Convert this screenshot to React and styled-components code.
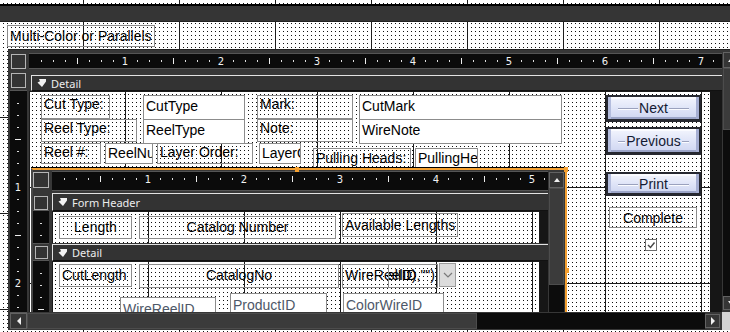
import React from "react"
import styled, { createGlobalStyle, css } from "styled-components"

const FRAME = "#373737"
const INK = "#0b0b0b"
const ORANGE = "#f5a02f"

const GlobalStyle = createGlobalStyle`
  html, body {
    margin: 0;
    padding: 0;
    background: #fff;
    overflow: hidden;
  }
  body {
    font-family: "Liberation Sans", Arial, sans-serif;
  }
`

// design-surface grid: 4px dots, a line every inch (96px)
const dotGrid = (ox = 0, oy = 0) => css`
  background-color: #111;
  background-image: linear-gradient(90deg, #1b1b1b 1px, transparent 1px),
    linear-gradient(180deg, #1b1b1b 1px, transparent 1px),
    linear-gradient(90deg, #fff 3px, transparent 3px),
    linear-gradient(180deg, #fff 3px, transparent 3px);
  background-size: 96px 96px, 96px 96px, 4px 4px, 4px 4px;
  background-position: ${ox}px 0, 0 ${oy}px, 0 0, 0 0;
`

const placed = css`
  position: absolute;
  left: ${p => p.$x}px;
  top: ${p => p.$y}px;
  width: ${p => p.$w}px;
  height: ${p => p.$h}px;
`

const boxText = css`
  box-sizing: border-box;
  border: 1px solid #8c8c8c;
  font: 14px/16px "Liberation Sans", Arial, sans-serif;
  color: #000;
  white-space: nowrap;
  overflow: hidden;
  padding: 0 2px;
`

const Canvas = styled.div`
  width: 730px;
  height: 332px;
  overflow: hidden;
  ${dotGrid(83, 21)}
`

const ParentBar = styled.div`
  margin-top: 4px;
  height: 15px;
  background: #353535;
  border-top: 2px solid #000;
  border-bottom: 1px solid #222;
`

const TitleRow = styled.div`
  box-sizing: border-box;
  height: 28px;
  padding: 3px 0 0 7px;
`

const TitleLabel = styled.div`
  ${boxText}
  width: 148px;
  height: 22px;
  padding-top: 2px;
`

const FormWindow = styled.div`
  margin-left: 8px;
  width: 740px;
  height: 280px;
  display: grid;
  grid-template-columns: 21px 693px 17px;
  grid-template-rows: 21px 20px 221px 18px;
  background: ${FRAME};
  box-shadow: 0 -1px 0 #222;
`

const Cell = styled.div`
  grid-column: ${p => p.$col};
  grid-row: ${p => p.$row};
  display: flex;
  flex-direction: ${p => (p.$column ? "column" : "row")};
  min-width: 0;
  min-height: 0;
  padding: ${p => p.$pad || "0"};
  box-sizing: border-box;
`

const SelectBox = styled.div`
  box-sizing: border-box;
  width: ${p => p.$size || 15}px;
  height: ${p => p.$size || 15}px;
  border: 1px solid #b5b5b5;
  background: #333;
`

const RulerStrip = styled.div`
  background: ${INK};
  box-shadow: 0 -1px 0 #555, 0 1px 0 #555;
  flex: ${p => (p.$fill ? 1 : "none")};
  svg {
    display: block;
  }
`

const SectionBar = styled.div`
  box-sizing: border-box;
  flex: 1;
  height: ${p => p.$h || 16}px;
  margin-top: ${p => p.$top || 0}px;
  background: #333;
  border-top: 1px solid #e2e2e2;
  border-left: 1px solid #e2e2e2;
  border-bottom: 1px solid #111;
  display: flex;
  align-items: center;
  gap: 4px;
  padding-left: 5px;
  color: #ededed;
  font: 11px "Noto Sans", "DejaVu Sans", sans-serif;
`

const Surface = styled.div`
  position: relative;
  overflow: hidden;
  width: ${p => p.$w}px;
  height: 100%;
  flex: none;
  ${dotGrid(0, 0)}
`

const DarkFill = styled.div`
  flex: 1;
  background: #161616;
`

const Label = styled.div`
  ${placed}
  ${boxText}
  text-align: ${p => (p.$center ? "center" : "left")};
  padding-top: ${p => p.$pt || 0}px;
`

const TextBox = styled.div`
  ${placed}
  ${boxText}
  background: ${p => (p.$clear ? "transparent" : "#fff")};
  color: ${p => (p.$muted ? "#4e5868" : "#000")};
  padding-top: ${p => p.$pt ?? 2}px;
  display: flex;
  justify-content: ${p => (p.$end ? "flex-end" : "flex-start")};
`

const DropButton = styled.div`
  ${placed}
  box-sizing: border-box;
  background: #dcdcdc;
  border: 1px solid #9c9c9c;
  display: flex;
  align-items: center;
  justify-content: center;
`

const CmdButton = styled.div`
  ${placed}
  box-sizing: border-box;
  border: 2px solid #262830;
  border-bottom-width: 3px;
  background: linear-gradient(180deg, #f3f5fd 0%, #e0e5f8 50%, #cfd6f1 100%);
  box-shadow: inset 3px 0 0 #b3bcdd, inset -3px 0 0 #a6afd3,
    inset 0 2px 0 #fafbff, inset 0 -2px 0 #9ca5c8;
  display: flex;
  align-items: center;
  justify-content: center;
  font: 14px "Liberation Sans", Arial, sans-serif;
  color: #141a33;

  &::before {
    content: "";
    position: absolute;
    left: 10px;
    right: 10px;
    top: 50%;
    height: 1px;
    background: #9aa1bd;
    box-shadow: 0 1px 0 #fafbff;
  }

  span {
    position: relative;
    padding: 0 1px;
    background: linear-gradient(180deg, transparent 0 35%, #e0e5f8 35% 65%, transparent 65%);
  }
`

const CheckBox = styled.div`
  ${placed}
  box-sizing: border-box;
  border: 1px solid #6e6e6e;
  background: #fff;
  svg {
    display: block;
  }
`

const Subform = styled.div`
  ${placed}
  box-sizing: border-box;
  border-top: 2px solid ${ORANGE};
  border-right: 2px solid ${ORANGE};
  border-left: 2px solid #474747;
  box-shadow: 0 -1px 0 #000;
  background: ${FRAME};
  display: grid;
  grid-template-columns: 19px 496px 17px;
  grid-template-rows: 20px 21px 32px 18px 1fr;
`

const Handle = styled.div`
  position: absolute;
  left: ${p => p.$x}px;
  top: ${p => p.$y}px;
  width: 4px;
  height: 5px;
  background: ${ORANGE};
`

const ScrollArrow = styled.div`
  box-sizing: border-box;
  flex: none;
  width: ${p => p.$w}px;
  height: ${p => p.$h}px;
  margin: ${p => p.$m || "0"};
  background: #353535;
  border: 1px solid #626262;
  display: flex;
  align-items: center;
  justify-content: center;
  svg {
    display: block;
  }
`

const ScrollThumb = styled.div`
  box-sizing: border-box;
  flex: none;
  width: ${p => (p.$w ? `${p.$w}px` : "auto")};
  height: ${p => (p.$h ? `${p.$h}px` : "auto")};
  background: #3b3b3b;
  border: 1px solid #4c4c4c;
`

const ScrollTrack = styled.div`
  flex: 1;
  background: #0c0c0c;
`

const Corner = styled.div`
  grid-column: 3;
  grid-row: 4;
  background: #d4d4d4;
`

const SectionGlyph = () => (
  <svg width="10" height="10" viewBox="0 0 10 10">
    <path d="M2 1 L9 1 L9 3.5 L5 9 L0.5 4.5 L3 3.2 Z" fill="#f2f2f2" />
  </svg>
)

const Arrow = ({ dir }) => {
  const pts = {
    up: "1,5 4,1 7,5",
    down: "1,1 4,5 7,1",
    left: "5,0 5,8 1,4",
    right: "1,0 1,8 5,4",
  }[dir]
  const vertical = dir === "up" || dir === "down"
  return (
    <svg width={vertical ? 8 : 6} height={vertical ? 6 : 8}>
      <polygon points={pts} fill="#f0f0f0" />
    </svg>
  )
}

const HRuler = ({ length }) => {
  const marks = []
  for (let i = 1; i * 12 < length; i++) {
    const x = i * 12
    if (i % 8 === 0) {
      marks.push(
        <text key={i} x={x} y={11} textAnchor="middle" fontSize="10" fill="#f2f2f2" fontFamily="DejaVu Sans, sans-serif">
          {i / 8}
        </text>
      )
    } else if (i % 4 === 0) {
      marks.push(<rect key={i} x={x} y={4} width={1} height={6} fill="#eee" />)
    } else {
      marks.push(<rect key={i} x={x} y={6} width={1} height={2} fill="#ddd" />)
    }
  }
  return (
    <svg width={length} height={14} shapeRendering="crispEdges">
      {marks}
    </svg>
  )
}

const VRuler = ({ length, width = 17 }) => {
  const marks = []
  const c = Math.floor(width / 2)
  for (let i = 1; i * 12 < length; i++) {
    const y = i * 12
    if (i % 8 === 0) {
      marks.push(
        <text key={i} x={c} y={y + 4} textAnchor="middle" fontSize="10" fill="#f2f2f2" fontFamily="DejaVu Sans, sans-serif">
          {i / 8}
        </text>
      )
    } else if (i % 4 === 0) {
      marks.push(<rect key={i} x={c - 3} y={y} width={6} height={1} fill="#eee" />)
    } else {
      marks.push(<rect key={i} x={c - 1} y={y} width={2} height={1} fill="#ddd" />)
    }
  }
  return (
    <svg width={width} height={length} shapeRendering="crispEdges">
      {marks}
    </svg>
  )
}

const SubformControl = () => (
  <Subform $x={2} $y={77} $w={536} $h={170}>
    <Cell $col={1} $row={1} $pad="2px 0 0 0">
      <SelectBox $size={16} />
    </Cell>
    <Cell $col={2} $row={1} $pad="2px 0 0 0">
      <RulerStrip $fill>
        <HRuler length={496} />
      </RulerStrip>
    </Cell>
    <Cell $col={3} $row="1 / 6" $column $pad="2px 1px 0 1px">
      <ScrollArrow $w={15} $h={16}>
        <Arrow dir="up" />
      </ScrollArrow>
      <ScrollThumb $h={97} />
      <ScrollTrack />
    </Cell>

    <Cell $col={1} $row={2} $pad="6px 0 0 1px">
      <SelectBox $size={14} />
    </Cell>
    <Cell $col={2} $row={2}>
      <SectionBar $top={3} $h={18}>
        <SectionGlyph />
        Form Header
      </SectionBar>
    </Cell>

    <Cell $col={1} $row={3}>
      <RulerStrip>
        <VRuler length={32} width={16} />
      </RulerStrip>
    </Cell>
    <Cell $col={2} $row={3}>
      <Surface $w={487}>
        <Label $x={7} $y={5} $w={73} $h={23} $center $pt={2}>Length</Label>
        <Label $x={87} $y={5} $w={197} $h={23} $center $pt={2}>Catalog Number</Label>
        <Label $x={290} $y={2} $w={116} $h={24} $center $pt={3}>Available Lengths</Label>
      </Surface>
      <DarkFill />
    </Cell>

    <Cell $col={1} $row={4} $pad="3px 0 0 2px">
      <SelectBox $size={13} />
    </Cell>
    <Cell $col={2} $row={4}>
      <SectionBar $top={1} $h={17}>
        <SectionGlyph />
        Detail
      </SectionBar>
    </Cell>

    <Cell $col={1} $row={5}>
      <RulerStrip>
        <VRuler length={67} width={16} />
      </RulerStrip>
    </Cell>
    <Cell $col={2} $row={5}>
      <Surface $w={487}>
        <Label $x={7} $y={3} $w={73} $h={23} $pt={2}>CutLength</Label>
        <Label $x={87} $y={3} $w={200} $h={24} $center $pt={2}>CatalogNo</Label>
        <TextBox $x={290} $y={3} $w={96} $h={24} $clear>WireReelID</TextBox>
        <TextBox $x={336} $y={3} $w={50} $h={24} $clear $end>ReelID),"")</TextBox>
        <DropButton $x={387} $y={2} $w={17} $h={24}>
          <svg width="10" height="6">
            <polyline points="1,1 5,5 9,1" fill="none" stroke="#7a7a7a" strokeWidth="1.2" />
          </svg>
        </DropButton>
        <TextBox $x={68} $y={36} $w={96} $h={24} $muted $pt={3}>WireReelID</TextBox>
        <TextBox $x={178} $y={32} $w={97} $h={24} $muted $pt={3}>ProductID</TextBox>
        <TextBox $x={291} $y={32} $w={101} $h={24} $muted $pt={3}>ColorWireID</TextBox>
      </Surface>
      <DarkFill />
    </Cell>
  </Subform>
)

export default function App() {
  return (
    <>
      <GlobalStyle />
      <Canvas>
        <ParentBar />
        <TitleRow>
          <TitleLabel>Multi-Color or Parallels</TitleLabel>
        </TitleRow>

        <FormWindow>
          <Cell $col={1} $row={1} $pad="4px 0 0 3px">
            <SelectBox />
          </Cell>
          <Cell $col={2} $row={1} $pad="4px 0 3px 0">
            <RulerStrip $fill>
              <HRuler length={693} />
            </RulerStrip>
          </Cell>
          <Cell $col={3} $row="1 / 4" $column $pad="2px 0 2px 1px">
            <ScrollArrow $w={16} $h={16}>
              <Arrow dir="up" />
            </ScrollArrow>
            <ScrollThumb $h={62} />
            <ScrollTrack />
            <ScrollArrow $w={16} $h={14}>
              <Arrow dir="down" />
            </ScrollArrow>
          </Cell>

          <Cell $col={1} $row={2} $pad="2px 0 0 3px">
            <SelectBox />
          </Cell>
          <Cell $col={2} $row={2} $pad="4px 0 0 2px">
            <SectionBar>
              <SectionGlyph />
              Detail
            </SectionBar>
          </Cell>

          <Cell $col={1} $row={3} $pad="0 0 0 2px">
            <RulerStrip>
              <VRuler length={221} />
            </RulerStrip>
          </Cell>
          <Cell $col={2} $row={3}>
            <Surface $w={681}>
              <Label $x={12} $y={4} $w={69} $h={24}>Cut Type:</Label>
              <Label $x={12} $y={28} $w={96} $h={23}>Reel Type:</Label>
              <Label $x={12} $y={52} $w={60} $h={21}>Reel #:</Label>
              <TextBox $x={76} $y={52} $w={48} $h={21} $pt={1}>ReelNumber</TextBox>
              <Label $x={128} $y={52} $w={96} $h={21}>Layer Order:</Label>
              <TextBox $x={230} $y={52} $w={42} $h={21} $pt={1}>LayerOrder</TextBox>
              <Label $x={284} $y={57} $w={98} $h={20} $pt={1}>Pulling Heads:</Label>
              <TextBox $x={386} $y={57} $w={63} $h={20} $pt={1}>PullingHeads</TextBox>

              <TextBox $x={114} $y={4} $w={102} $h={25}>CutType</TextBox>
              <TextBox $x={114} $y={28} $w={102} $h={25}>ReelType</TextBox>
              <Label $x={228} $y={4} $w={96} $h={24}>Mark:</Label>
              <Label $x={228} $y={28} $w={96} $h={23}>Note:</Label>
              <TextBox $x={330} $y={4} $w={203} $h={25}>CutMark</TextBox>
              <TextBox $x={330} $y={28} $w={203} $h={25}>WireNote</TextBox>

              <CmdButton $x={577} $y={4} $w={95} $h={27}>
                <span>Next</span>
              </CmdButton>
              <CmdButton $x={577} $y={36} $w={95} $h={28}>
                <span>Previous</span>
              </CmdButton>
              <CmdButton $x={577} $y={81} $w={95} $h={24}>
                <span>Print</span>
              </CmdButton>
              <Label $x={580} $y={116} $w={88} $h={21} $center $pt={2}>Complete</Label>
              <CheckBox $x={616} $y={148} $w={12} $h={12}>
                <svg width="10" height="10">
                  <polyline points="2,5 4.5,7.5 8.5,2.5" fill="none" stroke="#444" strokeWidth="1.4" />
                </svg>
              </CheckBox>

              <SubformControl />
              <Handle $x={266} $y={76} />
              <Handle $x={535} $y={76} />
              <Handle $x={536} $y={177} />
            </Surface>
            <DarkFill />
          </Cell>

          <Cell $col="1 / 3" $row={4} $pad="1px 2px 1px 2px">
            <ScrollArrow $w={17} $h={16}>
              <Arrow dir="left" />
            </ScrollArrow>
            <ScrollThumb $w={450} />
            <ScrollTrack />
            <ScrollArrow $w={15} $h={14} $m="1px 0 0 0">
              <Arrow dir="right" />
            </ScrollArrow>
          </Cell>
          <Corner />
        </FormWindow>
      </Canvas>
    </>
  )
}
